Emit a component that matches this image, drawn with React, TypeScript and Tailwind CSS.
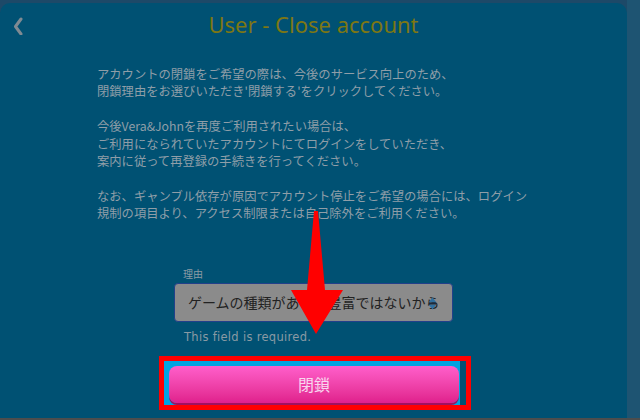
import React from 'react';

const ChevronLeft = () => (
    <svg width="11" height="18" viewBox="0 0 11 18" fill="none">
        <path d="M8 2L2.5 9.5 8 17" stroke="#7f8a92" strokeWidth={3} strokeLinecap="round" strokeLinejoin="round" />
    </svg>
);

const SelectArrows = () => (
    <svg width="9" height="13" viewBox="0 0 9 13">
        <path d="M4.5 0.5L8.5 5.5H0.5z" fill="#2f6f9f" />
        <path d="M4.5 12.5L8.5 7.5H0.5z" fill="#2f6f9f" />
        <rect x="1" y="5.5" width="7" height="2" fill="#1c2a3a" />
    </svg>
);

// annotation arrow drawn over the page
const RedArrow = () => (
    <svg className="absolute left-0 top-0 pointer-events-none" width="640" height="420" viewBox="0 0 640 420">
        <polygon points="314,211 318,211 325,290 343,290 316,334 291,290 307,290" fill="#ff0000" />
    </svg>
);

const paragraphs: string[][] = [
    ['アカウントの閉鎖をご希望の際は、今後のサービス向上のため、', "閉鎖理由をお選びいただき'閉鎖する'をクリックしてください。"],
    ['今後Vera&Johnを再度ご利用されたい場合は、', 'ご利用になられていたアカウントにてログインをしていただき、', '案内に従って再登録の手続きを行ってください。'],
    ['なお、ギャンブル依存が原因でアカウント停止をご希望の場合には、ログイン', '規制の項目より、アクセス制限または自己除外をご利用ください。'],
];

export default function App() {
    return (
        <div className="relative w-[640px] h-[420px] overflow-hidden bg-[#1d4968] flex flex-col font-['Noto_Sans_CJK_JP',sans-serif]">
            <div className="flex flex-1">
                <main className="mt-[3px] w-[627px] rounded-t-[10px] bg-[#005173] flex flex-col">
                    <header className="grid grid-cols-[40px_1fr_40px] items-center h-[40px]">
                        <button className="flex justify-start pl-[13px] pt-[6px]">
                            <ChevronLeft />
                        </button>
                        <h1 className="text-center text-[22px] leading-none pt-[2px] text-[#7d7714] font-['Noto_Sans',sans-serif]">
                            User - Close account
                        </h1>
                        <div />
                    </header>

                    <div className="mt-[23px] pl-[97px] text-[12.3px] leading-[17.4px] text-[#8f9ea8] whitespace-nowrap">
                        {paragraphs.map((lines, i) => (
                            <p key={i} className={i < paragraphs.length - 1 ? 'mb-[17.4px]' : ''}>
                                {lines.map((line, j) => (
                                    <React.Fragment key={j}>
                                        {line}
                                        {j < lines.length - 1 && <br />}
                                    </React.Fragment>
                                ))}
                            </p>
                        ))}
                    </div>

                    <div className="mt-[44px] ml-[174px] w-[279px]">
                        <label className="block pl-[9px] text-[10px] leading-[14px] text-[#8a9aa4]">理由</label>
                        <div className="relative mt-[2px] h-[39px] rounded-[4px] border-[1.5px] border-[#22408a] bg-[#8b8b8b] flex items-center pl-[13px] overflow-hidden">
                            <span className="text-[14px] text-[#222222] whitespace-nowrap">ゲームの種類があまり豊富ではないから</span>
                            <span className="absolute right-[15px] top-[13px]">
                                <SelectArrows />
                            </span>
                        </div>
                        <p className="mt-[8px] pl-[10px] text-[11.5px] leading-[14px] tracking-[0.3px] text-[#8a9aa4] font-['DejaVu_Sans',sans-serif]">
                            This field is required.
                        </p>
                    </div>

                    <div className="mt-[12px] ml-[159px] w-[312px] h-[54px] border-[5px] border-[#ff0000]">
                        <div className="w-[296px] h-[44px] bg-[#00a3e2] pl-[5px] pt-[5px]">
                            <button className="w-[290px] h-[37px] rounded-[8px] bg-gradient-to-b from-[#ff5ecb] to-[#e01f8c] shadow-[0_2px_0_#a0105f] text-[16px] text-[#f8d6ef]">
                                閉鎖
                            </button>
                        </div>
                    </div>
                </main>
                <div className="flex-1 bg-[#1e5472]" />
            </div>
            <div className="h-[2px] bg-[#4d4d4d]" />
            <RedArrow />
        </div>
    );
}
